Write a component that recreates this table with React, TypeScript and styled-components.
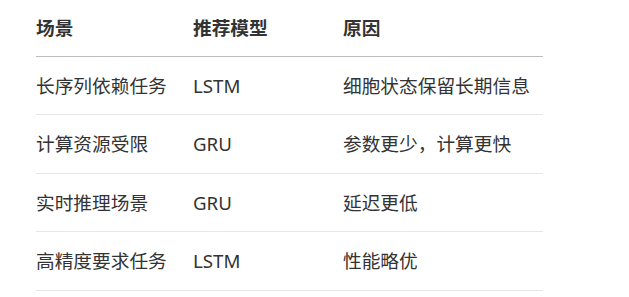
import styled, { createGlobalStyle } from "styled-components";

const GlobalStyle = createGlobalStyle`
  body {
    margin: 0;
    background: #ffffff;
    font-family: "Noto Sans", "Noto Sans CJK SC", sans-serif;
    color: #333333;
  }
`;

const Wrapper = styled.div`
  padding: 0 0 0 36px;
`;

const Table = styled.table`
  width: 507px;
  border-collapse: collapse;
  table-layout: fixed;
  font-size: 18.7px;
`;

const HeadCell = styled.th<{ $width?: number }>`
  width: ${(props) => (props.$width ? `${props.$width}px` : "auto")};
  text-align: left;
  font-weight: 700;
  line-height: 24px;
  padding: 16px 0;
  border-bottom: 1px solid #bdbdbd;
  color: #333333;
`;

const Cell = styled.td`
  line-height: 25.4px;
  padding: 16px 0;
  border-bottom: 1px solid #e6e6e6;
  white-space: nowrap;
`;

interface IRow {
  scene: string;
  model: string;
  reason: string;
}

const rows: IRow[] = [
  { scene: "长序列依赖任务", model: "LSTM", reason: "细胞状态保留长期信息" },
  { scene: "计算资源受限", model: "GRU", reason: "参数更少，计算更快" },
  { scene: "实时推理场景", model: "GRU", reason: "延迟更低" },
  { scene: "高精度要求任务", model: "LSTM", reason: "性能略优" },
];

function App() {
  return (
    <>
      <GlobalStyle />
      <Wrapper>
        <Table>
          <thead>
            <tr>
              <HeadCell $width={157}>场景</HeadCell>
              <HeadCell $width={150}>推荐模型</HeadCell>
              <HeadCell>原因</HeadCell>
            </tr>
          </thead>
          <tbody>
            {rows.map((row) => (
              <tr key={row.scene}>
                <Cell>{row.scene}</Cell>
                <Cell>{row.model}</Cell>
                <Cell>{row.reason}</Cell>
              </tr>
            ))}
          </tbody>
        </Table>
      </Wrapper>
    </>
  );
}

export default App;
